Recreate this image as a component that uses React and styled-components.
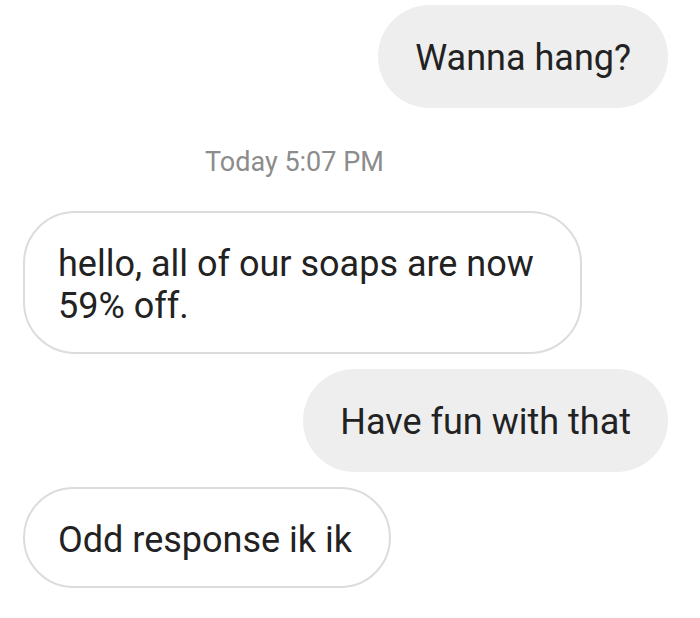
import React from "react";
import styled, { createGlobalStyle } from "styled-components";

const Global = createGlobalStyle`
  html, body { margin: 0; padding: 0; background: #ffffff; }
  body { font-family: Roboto, "Noto Sans", Arial, sans-serif; }
`;

const Thread = styled.div`
  width: 700px;
  height: 618px;
  box-sizing: border-box;
  padding: 5px 32px 0 23px;
  display: flex;
  flex-direction: column;
  background: #fff;
  overflow: hidden;
`;

const Bubble = styled.div`
  box-sizing: border-box;
  align-self: ${(p) => (p.$out ? "flex-end" : "flex-start")};
  max-width: 559px;
  padding: ${(p) => (p.$out ? "32px 37px 29px 37px" : "30px 37px 25px 33px")};
  border-radius: 52px;
  background: ${(p) => (p.$out ? "#eeeeee" : "#ffffff")};
  border: ${(p) => (p.$out ? "none" : "2px solid #dcdcdc")};
  color: #222222;
  font-size: 36px;
  line-height: 42px;
  margin-top: ${(p) => p.$gap || 0}px;
`;

const Stamp = styled.div`
  align-self: flex-start;
  margin: 37px 0 0 182px;
  color: #8c8c8c;
  font-size: 27px;
  line-height: 34px;
`;

export default function App() {
  return (
    <>
      <Global />
      <Thread>
        <Bubble $out>Wanna hang?</Bubble>
        <Stamp>Today 5:07 PM</Stamp>
        <Bubble $gap={32}>hello, all of our soaps are now 59% off.</Bubble>
        <Bubble $out $gap={15}>Have fun with that</Bubble>
        <Bubble $gap={15}>Odd response ik ik</Bubble>
      </Thread>
    </>
  );
}
